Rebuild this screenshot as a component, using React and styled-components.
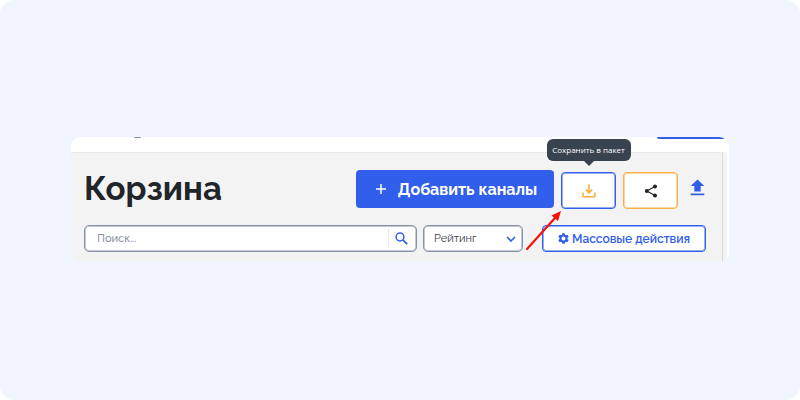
import React from "react"
import styled, { createGlobalStyle } from "styled-components"

const App = () => {
  return (
    <>
      <GlobalStyle />
      <Page>
        <Card>
          <TopBar>
            <LogoEdge />
            <AccountEdge />
          </TopBar>
          <Body>
            <Panel>
              <Row>
                <Title>Корзина</Title>
                <AddButton type="button">
                  <svg width="12" height="12" viewBox="0 0 12 12" aria-hidden="true">
                    <path d="M6 1v10M1 6h10" stroke="#fff" strokeWidth="1.5" />
                  </svg>
                  Добавить каналы
                </AddButton>
                <SaveWrap>
                  <Tooltip role="tooltip" id="save-tip">
                    Сохранить в пакет
                  </Tooltip>
                  <IconButton
                    type="button"
                    $color="#315eeb"
                    aria-label="Сохранить"
                    aria-describedby="save-tip"
                  >
                    <SaveIcon />
                  </IconButton>
                </SaveWrap>
                <IconButton type="button" $color="#fbb044" aria-label="Поделиться">
                  <ShareIcon />
                </IconButton>
                <UploadButton type="button" aria-label="Загрузить">
                  <UploadIcon />
                </UploadButton>
              </Row>
              <FilterRow>
                <Search>
                  <SearchInput
                    type="text"
                    placeholder="Поиск..."
                    aria-label="Поиск"
                  />
                  <SearchButton type="submit" aria-label="Найти">
                    <SearchIcon />
                  </SearchButton>
                </Search>
                <SelectWrap>
                  <Select aria-label="Сортировка">
                    <option>Рейтинг</option>
                  </Select>
                  <Chevron width="10" height="6" viewBox="0 0 10 6" aria-hidden="true">
                    <path d="M1 1l4 4 4-4" fill="none" stroke="#315eeb" strokeWidth="1.6" />
                  </Chevron>
                </SelectWrap>
                <BulkWrap>
                  <BulkButton type="button">
                    <GearIcon />
                    Массовые действия
                  </BulkButton>
                  <Pointer width="38" height="42" viewBox="0 0 38 42" aria-hidden="true">
                    <path d="M3 40L31 9" stroke="#f90d0d" strokeWidth="2.2" strokeLinecap="round" />
                    <path d="M37 2L34 12L27.5 6.5Z" fill="#f90d0d" />
                  </Pointer>
                </BulkWrap>
              </FilterRow>
            </Panel>
            <Gutter />
          </Body>
        </Card>
      </Page>
    </>
  )
}

export default App

const SaveIcon = () => (
  <svg width="14" height="14" viewBox="0 0 14 14" fill="none" aria-hidden="true">
    <path
      d="M7 0.5v8M3.8 5.6L7 8.8l3.2-3.2M1 8.5v3.2q0 1.1 1.1 1.1h9.8q1.1 0 1.1-1.1V8.5"
      stroke="#ffae38"
      strokeWidth="1.6"
    />
  </svg>
)

const ShareIcon = () => (
  <svg width="14" height="14" viewBox="0 0 14 14" aria-hidden="true">
    <path d="M11 2.4L2.8 7l8.2 4.6" fill="none" stroke="#212529" strokeWidth="1.2" />
    <circle cx="11" cy="2.4" r="2" fill="#212529" />
    <circle cx="2.8" cy="7" r="2" fill="#212529" />
    <circle cx="11" cy="11.6" r="2" fill="#212529" />
  </svg>
)

const UploadIcon = () => (
  <svg width="15" height="17" viewBox="0 0 15 17" fill="#315eeb" aria-hidden="true">
    <path d="M7.5 0.5L14.3 7h-3.6v5.5H4.3V7H0.7zM0.7 14.5h13.6v1.7H0.7z" />
  </svg>
)

const SearchIcon = () => (
  <svg width="13" height="13" viewBox="0 0 13 13" fill="none" aria-hidden="true">
    <circle cx="5" cy="5" r="3.9" stroke="#315eeb" strokeWidth="1.5" />
    <path d="M7.9 7.9l4.3 4.3" stroke="#315eeb" strokeWidth="1.7" />
  </svg>
)

const GearIcon = () => (
  <svg width="11" height="11" viewBox="2 2 20 20" fill="#315eeb" aria-hidden="true">
    <path d="M19.14 12.94c.04-.3.06-.61.06-.94 0-.32-.02-.64-.07-.94l2.03-1.58a.49.49 0 0 0 .12-.61l-1.92-3.32a.488.488 0 0 0-.59-.22l-2.39.96c-.5-.38-1.03-.7-1.62-.94l-.36-2.54a.484.484 0 0 0-.48-.41h-3.84c-.24 0-.43.17-.47.41l-.36 2.54c-.59.24-1.13.57-1.62.94l-2.39-.96c-.22-.08-.47 0-.59.22L2.74 8.87c-.12.21-.08.47.12.61l2.03 1.58c-.05.3-.09.63-.09.94s.02.64.07.94l-2.03 1.58a.49.49 0 0 0-.12.61l1.92 3.32c.12.22.37.29.59.22l2.39-.96c.5.38 1.03.7 1.62.94l.36 2.54c.05.24.24.41.48.41h3.84c.24 0 .44-.17.47-.41l.36-2.54c.59-.24 1.13-.56 1.62-.94l2.39.96c.22.08.47 0 .59-.22l1.92-3.32c.12-.22.07-.47-.12-.61l-2.01-1.58zM12 15.6a3.6 3.6 0 1 1 0-7.2 3.6 3.6 0 0 1 0 7.2z" />
  </svg>
)

//~~~~~~~~~~~~~~~~~~~
// Styled-Components
//~~~~~~~~~~~~~~~~~~~

const GlobalStyle = createGlobalStyle`
  * {
    box-sizing: border-box;
  }
  body {
    margin: 0;
    background: #fff;
  }
  body, button, input, select {
    font-family: Raleway, Inter, "Noto Sans", sans-serif;
  }
  button {
    padding: 0;
    cursor: pointer;
  }
`

const Page = styled.main`
  min-height: 100vh;
  padding: 137px 71px;
  border-radius: 14px;
  background: #f1f5ff;
`

const Card = styled.section`
  overflow: hidden;
  border-radius: 10px;
  background: #fff;
`

const TopBar = styled.header`
  display: flex;
  justify-content: space-between;
  height: 15px;
  padding: 0 3px 0 63px;
`

const LogoEdge = styled.span`
  width: 7px;
  height: 1px;
  border-radius: 0 0 4px 4px;
  background: #8b8f96;
`

const AccountEdge = styled.span`
  width: 69px;
  height: 2px;
  border-radius: 0 0 6px 6px;
  background: #315eeb;
`

const Body = styled.div`
  display: flex;
  padding-right: 2px;
`

const Panel = styled.div`
  flex: 1;
  padding: 17px 16px 10px 13px;
  border-top: 1px solid #e9e9eb;
  border-right: 1px solid #d9dae3;
  background: #f3f3f3;
`

const Gutter = styled.div`
  width: 4px;
  background: #f3f3f3;
`

const Row = styled.div`
  display: flex;
  align-items: flex-start;
  gap: 7px;
  height: 39px;
`

const Title = styled.h1`
  flex: 1;
  margin: 0;
  color: #212529;
  font-size: 33px;
  line-height: 38px;
  font-weight: 700;
`

const AddButton = styled.button`
  display: flex;
  align-items: center;
  justify-content: center;
  gap: 11px;
  width: 198px;
  height: 38px;
  padding-left: 2px;
  border: 0;
  border-radius: 4px;
  background: #315eeb;
  color: #fff;
  font-size: 16px;
  font-weight: 700;
  white-space: nowrap;
`

const SaveWrap = styled.div`
  position: relative;
  display: flex;
`

// 1px line with a paler inner line, so outlines stay light
const IconButton = styled.button`
  display: flex;
  align-items: center;
  justify-content: center;
  width: 55px;
  height: 37px;
  margin-top: 2px;
  border: 1px solid ${(props) => props.$color};
  border-radius: 4px;
  box-shadow: inset 0 0 0 1px ${(props) => props.$color}80;
  background: #fff;
`

const Tooltip = styled.div`
  position: absolute;
  bottom: 48px;
  left: 50%;
  width: 84px;
  margin-left: -42px;
  border-radius: 6px;
  background: #394350;
  color: #fff;
  font-family: "Open Sans", "Noto Sans", sans-serif;
  font-size: 8px;
  line-height: 22px;
  text-align: center;
  white-space: nowrap;

  &::after {
    content: "";
    position: absolute;
    top: 100%;
    left: 50%;
    margin-left: -5px;
    border: 5px solid transparent;
    border-bottom: 0;
    border-top-color: #394350;
  }
`

const UploadButton = styled.button`
  display: flex;
  align-items: center;
  justify-content: flex-end;
  width: 21px;
  height: 34px;
  padding-right: 1px;
  border: 0;
  background: none;
`

const FilterRow = styled.div`
  display: flex;
  gap: 6px;
  height: 27px;
  margin-top: 16px;
`

const Search = styled.form`
  display: flex;
  flex: 1;
  align-items: center;
  padding: 1px;
  border: 1px solid #8792a5;
  border-radius: 5px;
  box-shadow: inset 0 0 0 1px #8792a580;
  background: #fff;
`

const SearchInput = styled.input`
  flex: 1;
  min-width: 0;
  padding: 0 0 0 11px;
  border: 0;
  outline: 0;
  background: none;
  font-size: 11px;
  font-weight: 500;

  &::placeholder {
    color: #8b93a5;
  }
`

const SearchButton = styled.button`
  display: flex;
  align-items: center;
  justify-content: center;
  width: 27px;
  height: 19px;
  padding-right: 2px;
  border: 0;
  border-left: 1px solid #e4e6ed;
  background: none;
`

const SelectWrap = styled.div`
  position: relative;
  width: 100px;
`

const Select = styled.select`
  width: 100%;
  height: 100%;
  padding: 0 24px 0 10px;
  border: 1px solid #8792a5;
  border-radius: 5px;
  box-shadow: inset 0 0 0 1px #8792a580;
  appearance: none;
  background: #fff;
  color: #3d4248;
  font-size: 11px;
  font-weight: 400;
`

const Chevron = styled.svg`
  position: absolute;
  top: 11px;
  right: 7px;
  pointer-events: none;
`

const BulkWrap = styled.div`
  position: relative;
  display: flex;
  margin-left: 13px;
`

const BulkButton = styled.button`
  display: flex;
  align-items: center;
  justify-content: center;
  gap: 3px;
  width: 164px;
  border: 1px solid #315eeb;
  border-radius: 4px;
  box-shadow: inset 0 0 0 1px #315eeb80;
  background: #fff;
  color: #315eeb;
  font-size: 12px;
  font-weight: 600;
  white-space: nowrap;
`

const Pointer = styled.svg`
  position: absolute;
  bottom: 1px;
  left: -18px;
  pointer-events: none;
`
